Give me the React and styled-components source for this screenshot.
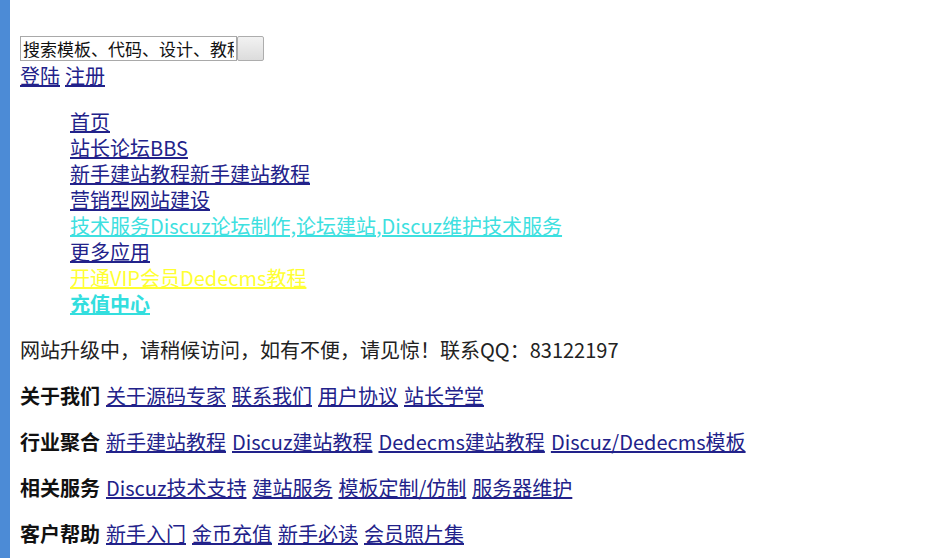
import React from 'react';
import styled, { createGlobalStyle } from 'styled-components';

const Global = createGlobalStyle`
  html, body {
    margin: 0;
    padding: 0;
    background: #fff;
  }
  body {
    font-family: "Noto Sans CJK SC", "Noto Sans", sans-serif;
    font-size: 20px;
    line-height: 26px;
    color: #222;
  }
`;

const Page = styled.div`
  min-height: 558px;
  border-left: 10px solid #4c8bd6;
  padding: 36px 0 0 10px;
  box-sizing: border-box;
`;

const SearchForm = styled.form`
  display: flex;
  margin: 0;
`;

const SearchInput = styled.input`
  width: 217px;
  height: 25px;
  box-sizing: border-box;
  border: 1px solid #a9a9a9;
  padding: 0 2px;
  font-family: "Noto Sans CJK SC", sans-serif;
  font-size: 17px;
  color: #111;
  outline: none;
`;

const SearchButton = styled.button`
  width: 27px;
  height: 25px;
  box-sizing: border-box;
  border: 1px solid #adadad;
  border-radius: 2px;
  background: linear-gradient(#f2f2f2, #dcdcdc);
  padding: 0;
`;

const Link = styled.a`
  color: ${p => p.$color || '#22228a'};
  font-weight: ${p => (p.$bold ? 700 : 400)};
  text-decoration: underline;
`;

const UserLinks = styled.div`
  margin-top: 2px;
  display: flex;
  gap: 5px;
`;

const Menu = styled.ul`
  list-style: none;
  margin: 20px 0 0;
  padding-left: 50px;
`;

const Item = styled.li`
  line-height: 26px;
`;

const Para = styled.p`
  margin: 20px 0;
  display: flex;
  gap: 6px;
  color: #222;
`;

const Label = styled.b`
  color: #111;
`;

const menu = [
  { t: '首页' },
  { t: '站长论坛BBS' },
  { t: '新手建站教程新手建站教程' },
  { t: '营销型网站建设' },
  { t: '技术服务Discuz论坛制作,论坛建站,Discuz维护技术服务', c: '#3ee0e0' },
  { t: '更多应用' },
  { t: '开通VIP会员Dedecms教程', c: '#ffff33' },
  { t: '充值中心', c: '#33dede', b: true },
];

const groups = [
  ['关于我们', ['关于源码专家', '联系我们', '用户协议', '站长学堂']],
  ['行业聚合', ['新手建站教程', 'Discuz建站教程', 'Dedecms建站教程', 'Discuz/Dedecms模板']],
  ['相关服务', ['Discuz技术支持', '建站服务', '模板定制/仿制', '服务器维护']],
  ['客户帮助', ['新手入门', '金币充值', '新手必读', '会员照片集']],
];

export default function App() {
  return (
    <Page>
      <Global />
      <SearchForm onSubmit={e => e.preventDefault()}>
        <SearchInput defaultValue="搜索模板、代码、设计、教程" />
        <SearchButton type="submit" />
      </SearchForm>
      <UserLinks>
        <Link href="#">登陆</Link>
        <Link href="#">注册</Link>
      </UserLinks>
      <Menu>
        {menu.map(m => (
          <Item key={m.t}>
            <Link href="#" $color={m.c} $bold={m.b}>{m.t}</Link>
          </Item>
        ))}
      </Menu>
      <Para>网站升级中，请稍候访问，如有不便，请见惊！联系QQ：83122197</Para>
      {groups.map(([label, links]) => (
        <Para key={label}>
          <Label>{label}</Label>
          {links.map(l => (
            <Link href="#" key={l}>{l}</Link>
          ))}
        </Para>
      ))}
    </Page>
  );
}
